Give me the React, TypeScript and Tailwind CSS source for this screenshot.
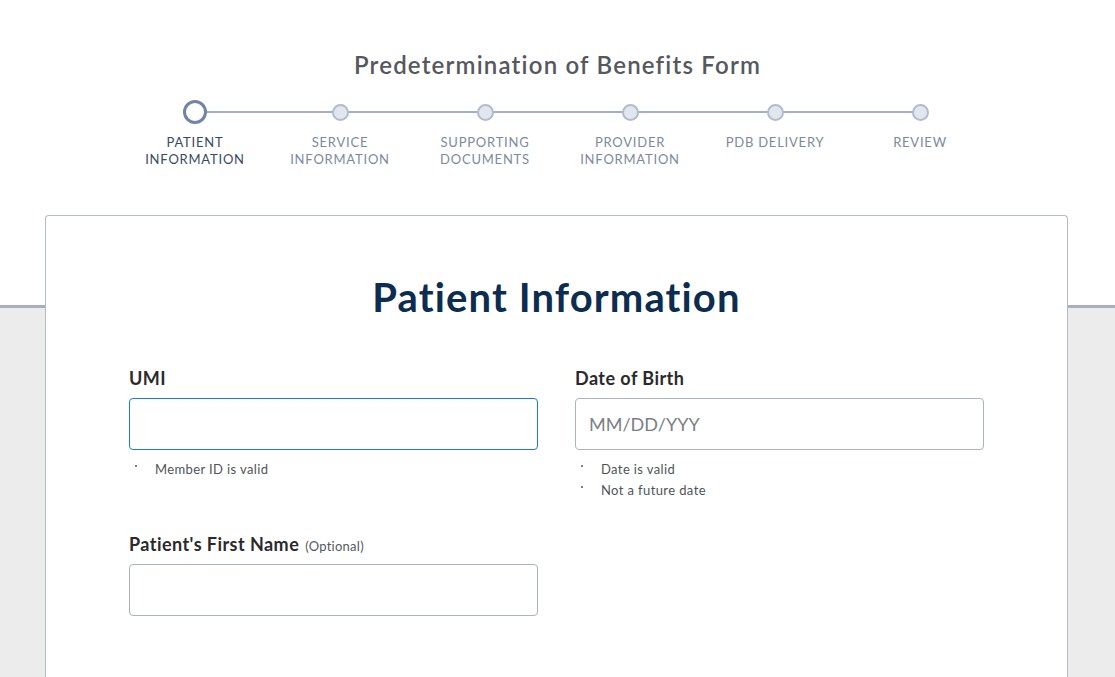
import React from "react";

type Step = {
  lines: string[];
  active?: boolean;
};

const steps: Step[] = [
  { lines: ["PATIENT", "INFORMATION"], active: true },
  { lines: ["SERVICE", "INFORMATION"] },
  { lines: ["SUPPORTING", "DOCUMENTS"] },
  { lines: ["PROVIDER", "INFORMATION"] },
  { lines: ["PDB DELIVERY"] },
  { lines: ["REVIEW"] },
];

const font = { fontFamily: "Lato, 'Open Sans', sans-serif" };

function Stepper() {
  return (
    <div className="relative mx-auto mt-[19px] flex w-[870px]">
      <div className="absolute left-[72px] right-[72px] top-[11px] h-[2px] bg-[#a3afc4]" />
      {steps.map((step) => (
        <div key={step.lines.join(" ")} className="relative flex w-[145px] flex-col items-center">
          <div className="flex h-[24px] items-center justify-center">
            {step.active ? (
              <div className="h-[24px] w-[24px] rounded-full border-[3px] border-[#7185a6] bg-white" />
            ) : (
              <div className="h-[17px] w-[17px] rounded-full border-2 border-[#b2bccc] bg-[#e2e6ee]" />
            )}
          </div>
          <div
            className={
              "mt-[10px] text-center text-[13px] leading-[17px] tracking-[0.06em] " +
              (step.active ? "text-[#3a4a5e]" : "text-[#7d8a9c]")
            }
          >
            {step.lines.map((l) => (
              <div key={l}>{l}</div>
            ))}
          </div>
        </div>
      ))}
    </div>
  );
}

function Field({
  label,
  optional,
  placeholder,
  focused,
  hints,
}: {
  label: string;
  optional?: boolean;
  placeholder?: string;
  focused?: boolean;
  hints?: string[];
}) {
  return (
    <div>
      <div className="h-[24px] text-[18px] font-bold leading-[24px] tracking-[0.025em] text-[#2a2a2c]">
        {label}
        {optional && (
          <span className="ml-[6px] text-[13px] font-normal leading-none tracking-[0.02em] text-[#555a60]">
            (Optional)
          </span>
        )}
      </div>
      <div
        className={
          "mt-[8px] flex h-[52px] items-center rounded-[4px] border bg-white px-[13px] text-[18px] text-[#7b7f85] " +
          (focused ? "border-[#1b7bd8]" : "border-[#a9b3c3]")
        }
      >
        {placeholder}
      </div>
      {hints && (
        <ul className="mt-[9px]">
          {hints.map((h) => (
            <li key={h} className="flex items-start text-[13px] leading-[21px] tracking-[0.03em] text-[#50545a]">
              <span className="ml-[6px] mt-[6px] h-[2px] w-[2px] rounded-full bg-[#50545a]" />
              <span className="ml-[18px]">{h}</span>
            </li>
          ))}
        </ul>
      )}
    </div>
  );
}

export default function App() {
  return (
    <div className="min-h-[677px] bg-[#ececec]" style={font}>
      <div className="h-[308px] border-b-[3px] border-[#a7afc1] bg-white pt-[49px]">
        <h1 className="text-center text-[24px] font-semibold leading-[32px] tracking-[0.05em] text-[#55585e]">
          Predetermination of Benefits Form
        </h1>
        <Stepper />
      </div>
      <div className="mx-[45px] -mt-[93px] h-[470px] w-[1023px] rounded-t-[4px] border border-b-0 border-[#b3bbc9] bg-white px-[83px] pt-[57px]">
        <h2 className="text-center text-[40px] font-bold leading-[48px] tracking-[0.028em] text-[#0c2c50]">
          Patient Information
        </h2>
        <div className="mt-[45px] grid grid-cols-2 gap-x-[37px] gap-y-[31px]">
          <Field label="UMI" focused hints={["Member ID is valid"]} />
          <Field label="Date of Birth" placeholder="MM/DD/YYY" hints={["Date is valid", "Not a future date"]} />
          <Field label="Patient's First Name" optional />
        </div>
      </div>
    </div>
  );
}
